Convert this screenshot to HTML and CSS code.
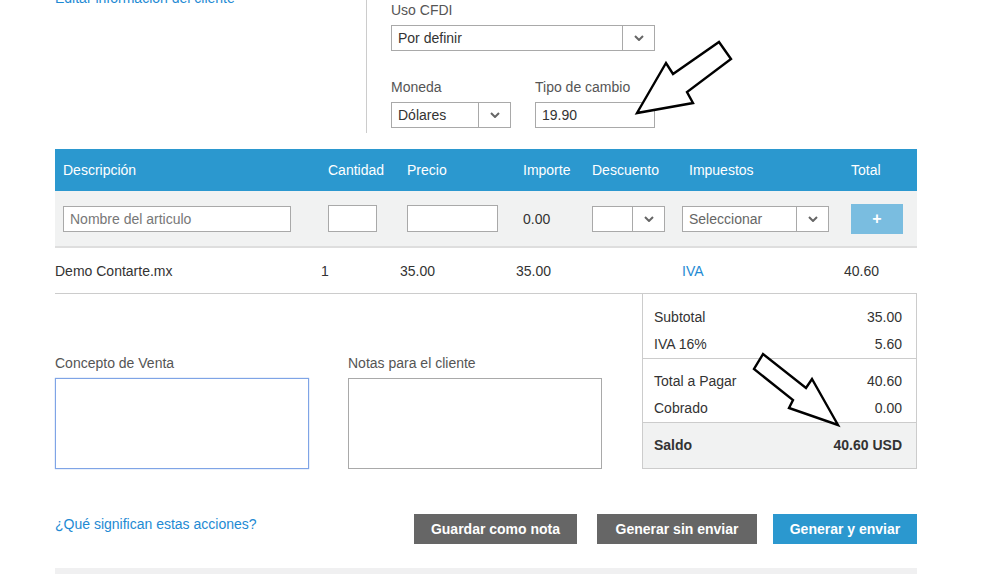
FILE: index.html
```html
<!DOCTYPE html>
<html lang="es">

<head>
    <meta charset="UTF-8">
    <meta name="viewport" content="width=device-width, initial-scale=1.0">
    <title>Nueva venta</title>
    <link rel="stylesheet" href="styles.css">
</head>

<body>
    <div class="page">
        <div class="top">
            <div class="client">
                <a href="#" class="link client-link">Editar información del cliente</a>
            </div>
            <div class="fiscal">
                <label class="field-label">Uso CFDI</label>
                <div class="select cfdi">
                    <span class="select-value">Por definir</span>
                    <span class="caret"><svg width="10" height="6" viewBox="0 0 10 6"><path d="M1 1l4 4 4-4" fill="none" stroke="#666" stroke-width="2"/></svg></span>
                </div>
                <div class="pair">
                    <div class="field">
                        <label class="field-label">Moneda</label>
                        <div class="select currency">
                            <span class="select-value">Dólares</span>
                            <span class="caret"><svg width="10" height="6" viewBox="0 0 10 6"><path d="M1 1l4 4 4-4" fill="none" stroke="#666" stroke-width="2"/></svg></span>
                        </div>
                    </div>
                    <div class="field">
                        <label class="field-label">Tipo de cambio</label>
                        <input type="text" class="text rate" value="19.90">
                    </div>
                </div>
            </div>
        </div>

        <div class="items">
            <div class="row head">
                <div class="cell">Descripción</div>
                <div class="cell">Cantidad</div>
                <div class="cell">Precio</div>
                <div class="cell">Importe</div>
                <div class="cell">Descuento</div>
                <div class="cell">Impuestos</div>
                <div class="cell">Total</div>
            </div>
            <div class="row entry">
                <div class="cell"><input type="text" class="text name" placeholder="Nombre del articulo"></div>
                <div class="cell"><input type="text" class="text qty"></div>
                <div class="cell"><input type="text" class="text price"></div>
                <div class="cell">0.00</div>
                <div class="cell discount">
                    <div class="select disc">
                        <span class="select-value"></span>
                        <span class="caret"><svg width="10" height="6" viewBox="0 0 10 6"><path d="M1 1l4 4 4-4" fill="none" stroke="#666" stroke-width="2"/></svg></span>
                    </div>
                </div>
                <div class="cell taxes">
                    <div class="select tax">
                        <span class="select-value muted">Seleccionar</span>
                        <span class="caret"><svg width="10" height="6" viewBox="0 0 10 6"><path d="M1 1l4 4 4-4" fill="none" stroke="#666" stroke-width="2"/></svg></span>
                    </div>
                </div>
                <div class="cell"><button class="add">+</button></div>
            </div>
            <div class="row item">
                <div class="cell first">Demo Contarte.mx</div>
                <div class="cell">1</div>
                <div class="cell">35.00</div>
                <div class="cell">35.00</div>
                <div class="cell"></div>
                <div class="cell"><a href="#" class="link">IVA</a></div>
                <div class="cell">40.60</div>
            </div>
        </div>

        <div class="lower">
            <div class="notes">
                <div class="note">
                    <label class="field-label">Concepto de Venta</label>
                    <textarea class="area focused"></textarea>
                </div>
                <div class="note">
                    <label class="field-label">Notas para el cliente</label>
                    <textarea class="area"></textarea>
                </div>
            </div>
            <div class="totals">
                <div class="group first-group">
                    <div class="line"><span>Subtotal</span><span>35.00</span></div>
                    <div class="line"><span>IVA 16%</span><span>5.60</span></div>
                </div>
                <div class="group">
                    <div class="line"><span>Total a Pagar</span><span>40.60</span></div>
                    <div class="line"><span>Cobrado</span><span>0.00</span></div>
                </div>
                <div class="balance"><span>Saldo</span><span>40.60 USD</span></div>
            </div>
        </div>

        <div class="actions">
            <a href="#" class="link help">¿Qué significan estas acciones?</a>
            <div class="buttons">
                <button class="btn dark save">Guardar como nota</button>
                <button class="btn dark draft">Generar sin enviar</button>
                <button class="btn blue send">Generar y enviar</button>
            </div>
        </div>

        <div class="bottom-bar"></div>
    </div>

    <!-- hand drawn arrows over the screenshot -->
    <svg class="arrows" width="981" height="574" viewBox="0 0 981 574">
        <polygon points="637,113 666,63 673,74 719,42 731,59 687,92 693,103" fill="#fff" stroke="#000" stroke-width="2.4" stroke-linejoin="miter"/>
        <polygon points="763,354 754,369 793,400 789,408 838,425 812,379 806,388" fill="#fff" stroke="#000" stroke-width="2.4" stroke-linejoin="miter"/>
    </svg>
</body>

</html>
```

FILE: styles.css
```css
body {
    margin: 0;
    font-family: "Liberation Sans", Arial, sans-serif;
    font-size: 14px;
    color: #333;
    background: #fff;
    overflow: hidden;
}

.page {
    width: 862px;
    margin-left: 55px;
}

.link {
    color: #1e8ad3;
    text-decoration: none;
}

/****TOP****/

.top {
    display: flex;
    height: 133px;
    margin-bottom: 16px;
}

.client {
    width: 311px;
    border-right: 1px solid #ccc;
}

.client-link {
    display: block;
    margin-top: -10px;
    line-height: 16px;
}

.fiscal {
    padding-left: 24px;
}

.field-label {
    display: block;
    line-height: 16px;
    margin-bottom: 7px;
    color: #555;
}

.fiscal > .field-label {
    margin-top: 2px;
}

.pair {
    display: flex;
    gap: 24px;
    margin-top: 28px;
}

.select {
    display: flex;
    box-sizing: border-box;
    height: 26px;
    border: 1px solid #a9a9a9;
    background: #fff;
}

.select-value {
    flex: 1;
    padding-left: 6px;
    line-height: 24px;
    color: #333;
}

.select-value.muted {
    color: #666;
}

.caret {
    display: flex;
    align-items: center;
    justify-content: center;
    width: 31px;
    border-left: 1px solid #a9a9a9;
}

.cfdi {
    width: 264px;
}

.currency {
    width: 120px;
}

.text {
    box-sizing: border-box;
    height: 26px;
    border: 1px solid #a9a9a9;
    padding: 0 6px;
    font-family: inherit;
    font-size: 14px;
    color: #333;
    outline: none;
}

.text::placeholder {
    color: #777;
}

.rate {
    width: 120px;
}

/****ITEMS****/

.row {
    display: grid;
    grid-template-columns: 265px 79px 116px 69px 97px 162px 74px;
    align-items: center;
}

.head {
    height: 42px;
    background: #2b98cf;
    color: #fff;
}

.head .cell,
.entry .cell {
    padding-left: 8px;
}

.entry {
    height: 55px;
    background: #f1f2f2;
    border-bottom: 2px solid #dedede;
}

.entry .taxes {
    padding-left: 1px;
}

.name {
    width: 228px;
}

.qty {
    width: 49px;
    height: 27px;
}

.price {
    width: 91px;
    height: 27px;
}

.disc {
    width: 73px;
}

.tax {
    width: 147px;
}

.add {
    width: 52px;
    height: 30px;
    border: none;
    background: #7abde0;
    color: #fff;
    font-family: inherit;
    font-size: 16px;
    font-weight: bold;
}

.item {
    height: 45px;
    border-bottom: 1px solid #ccc;
}

.item .cell {
    padding-left: 1px;
}

.item .first {
    padding-left: 0;
}

/****LOWER****/

.lower {
    display: flex;
    justify-content: space-between;
    align-items: flex-end;
}

.notes {
    display: flex;
    gap: 39px;
}

.area {
    display: block;
    box-sizing: border-box;
    width: 254px;
    height: 91px;
    border: 1px solid #a9a9a9;
    resize: none;
    outline: none;
}

.area.focused {
    border-color: #7fa4e6;
    box-shadow: 0 0 1px #7fa4e6;
}

.totals {
    width: 275px;
    box-sizing: border-box;
    border: 1px solid #ccc;
    border-top: none;
}

.group {
    padding: 9px 14px 0 11px;
}

.first-group {
    padding-top: 10px;
    border-bottom: 1px solid #ccc;
}

.line,
.balance {
    display: flex;
    justify-content: space-between;
    line-height: 27px;
}

.balance {
    height: 45px;
    line-height: 45px;
    padding: 0 14px 0 11px;
    background: #f1f2f2;
    border-top: 1px solid #ccc;
    font-weight: bold;
}

/****ACTIONS****/

.actions {
    display: flex;
    justify-content: space-between;
    align-items: flex-start;
    margin-top: 45px;
}

.help {
    line-height: 16px;
    margin-top: 2px;
}

.buttons {
    display: flex;
}

.btn {
    height: 30px;
    padding: 0;
    border: none;
    color: #fff;
    font-family: inherit;
    font-size: 14px;
    font-weight: bold;
}

.btn.dark {
    background: #666;
}

.btn.save {
    width: 163px;
    margin-right: 20px;
}

.btn.draft {
    width: 160px;
    margin-right: 16px;
}

.btn.blue {
    width: 144px;
    background: #2b98cf;
}

.bottom-bar {
    height: 20px;
    margin-top: 24px;
    background: #f0f0f1;
}

.arrows {
    position: absolute;
    top: 0;
    left: 0;
    pointer-events: none;
}
```
